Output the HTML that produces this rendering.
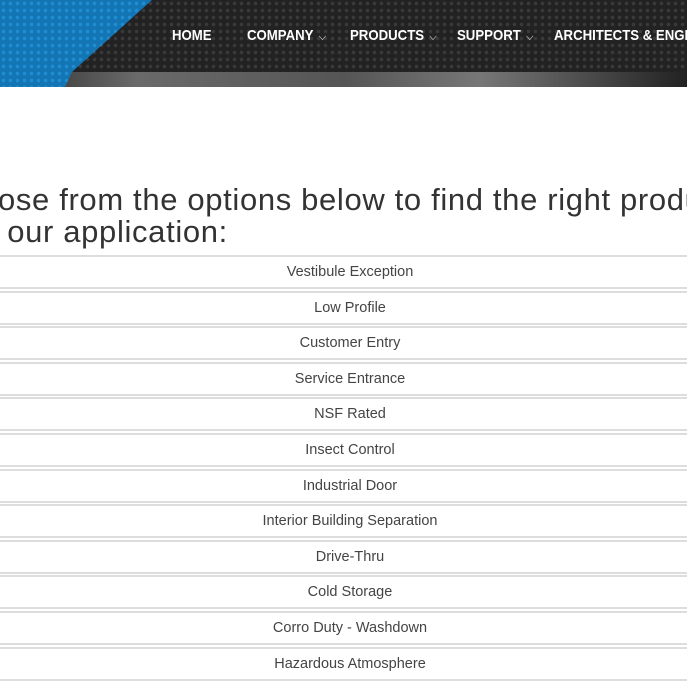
<!DOCTYPE html>
<html><head><style>
body{margin:0;width:687px;height:687px;overflow:hidden;background:#fff;font-family:"Liberation Sans",sans-serif;position:relative}
.hdr{position:absolute;left:0;top:0;width:687px;height:72px;background:radial-gradient(circle,#3a3a3a 1.5px,#222 2px) 0 0/7px 7px;}
.strip{position:absolute;left:0;top:72px;width:687px;height:15px;background:linear-gradient(90deg,#2a2a2a,#6a6a6a 20%,#555 50%,#777 70%,#222);}
.blue{position:absolute;left:0;top:0;width:160px;height:87px;background:radial-gradient(circle,#1e8ed0 1.6px,#1475b5 2px) 0 0/7px 7px;clip-path:polygon(0 0,152px 0,72px 72px,65px 87px,0 87px);}
.nav{position:absolute;top:27px;color:#fff;font-weight:bold;font-size:15px;white-space:nowrap;transform:scaleX(0.88);transform-origin:0 0}
.nav span{font-weight:normal;font-size:11px;margin-left:6px}
h1{position:absolute;left:-2px;top:184px;margin:0;font-weight:normal;font-size:31px;line-height:32px;color:#333;white-space:nowrap;letter-spacing:0.65px}
.wrap{position:absolute;left:0;top:0;width:687px;height:687px;overflow:hidden}
.row{position:absolute;left:-5px;width:697px;height:30px;border-top:2px solid #ddd;border-bottom:2px solid #ddd;text-align:center;line-height:31px;font-size:14.5px;color:#444}
.row div{margin-left:13px}
</style></head><body>
<div class="wrap">
<div class="hdr"></div><div class="strip"></div><div class="blue"></div>
<div class="nav" style="left:172px">HOME</div>
<div class="nav" style="left:247px">COMPANY<span>⌵</span></div>
<div class="nav" style="left:350px">PRODUCTS<span>⌵</span></div>
<div class="nav" style="left:457px">SUPPORT<span>⌵</span></div>
<div class="nav" style="left:554px">ARCHITECTS &amp; ENGINEERS</div>
<h1>ose from the options below to find the right product for<br>&nbsp;our application:</h1>
<div class="row" style="top:255px"><div>Vestibule Exception</div></div>
<div class="row" style="top:290.6px"><div>Low Profile</div></div>
<div class="row" style="top:326.2px"><div>Customer Entry</div></div>
<div class="row" style="top:361.8px"><div>Service Entrance</div></div>
<div class="row" style="top:397.4px"><div>NSF Rated</div></div>
<div class="row" style="top:433px"><div>Insect Control</div></div>
<div class="row" style="top:468.6px"><div>Industrial Door</div></div>
<div class="row" style="top:504.2px"><div>Interior Building Separation</div></div>
<div class="row" style="top:539.8px"><div>Drive-Thru</div></div>
<div class="row" style="top:575.4px"><div>Cold Storage</div></div>
<div class="row" style="top:611px"><div>Corro Duty - Washdown</div></div>
<div class="row" style="top:646.6px"><div>Hazardous Atmosphere</div></div>
</div>
</body></html>
